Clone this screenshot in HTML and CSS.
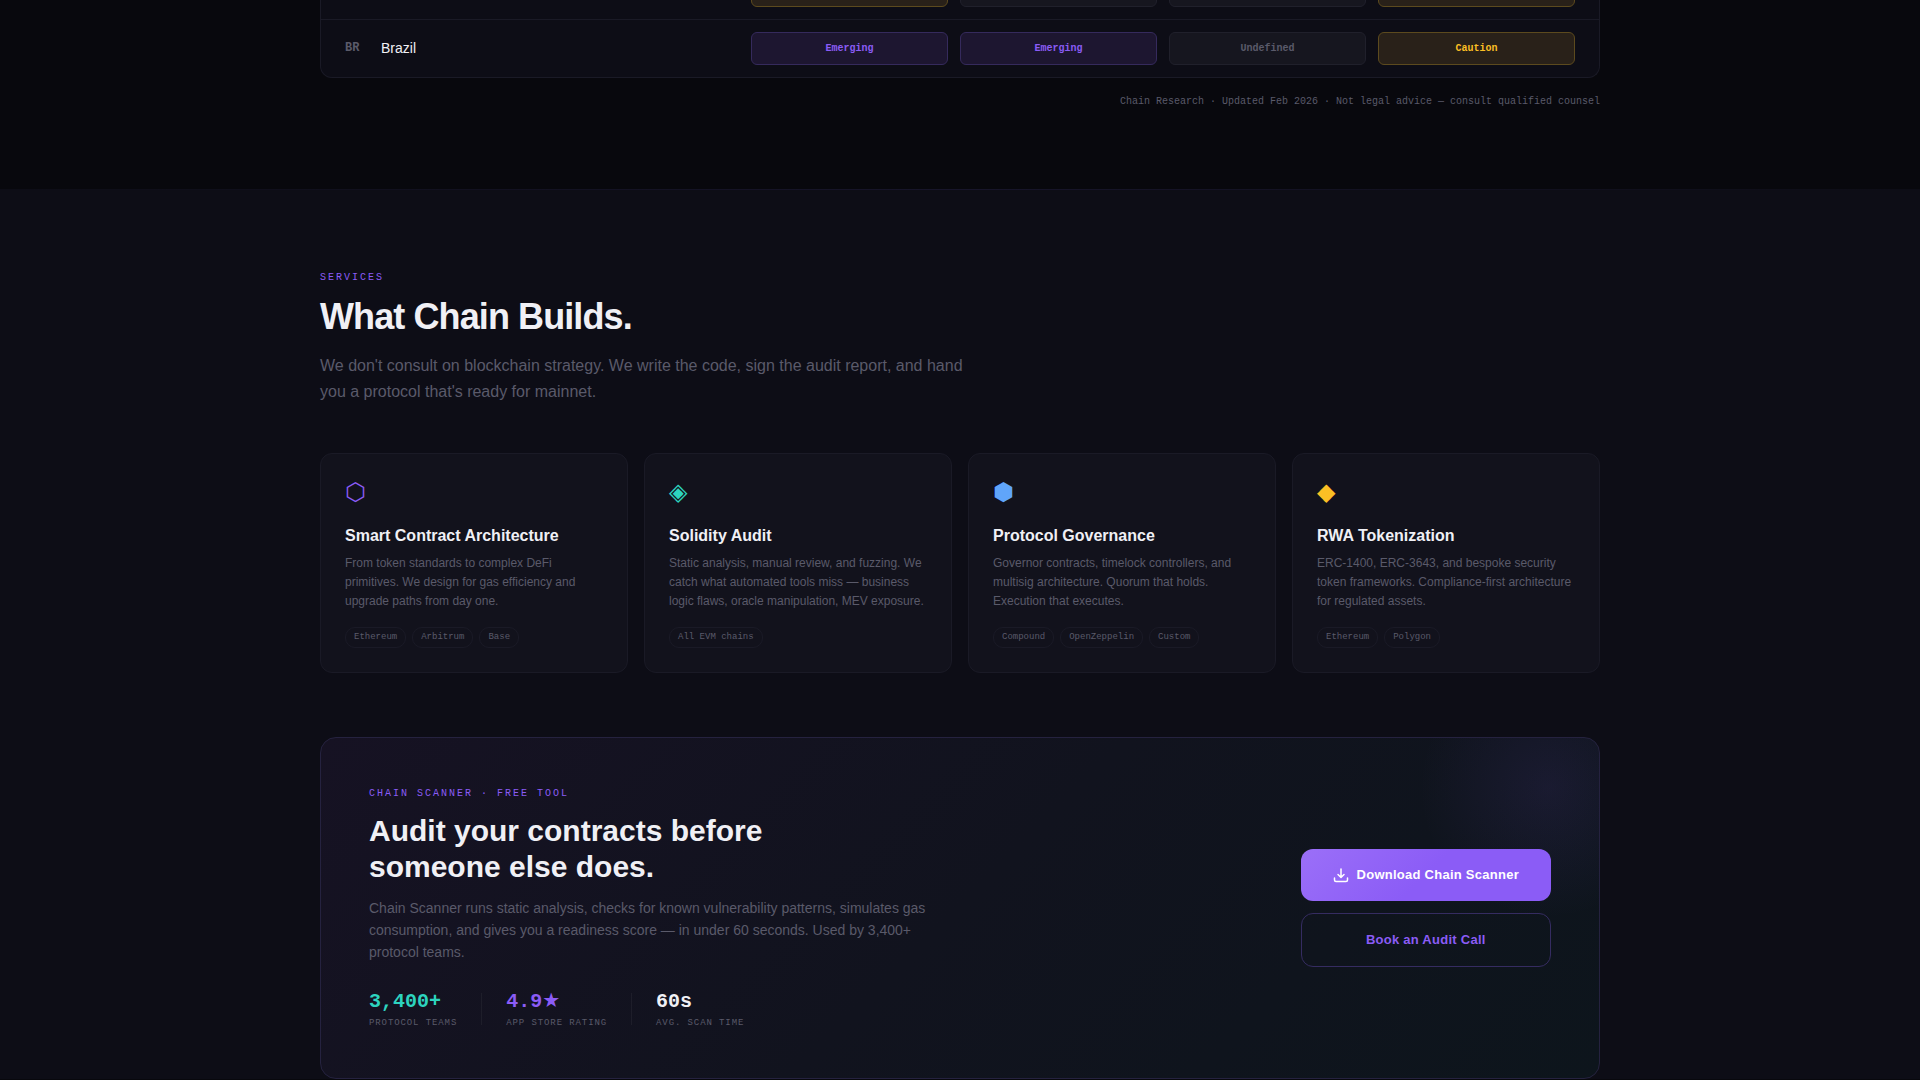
FILE: index.html
```
<!DOCTYPE html>
<html lang="en">
<head>
  <meta charset="UTF-8" />
  <meta name="viewport" content="width=device-width, initial-scale=1.0"/>
  <title>Chain | Services</title>
  <link rel="stylesheet" href="styles.css">
</head>
<body>

  <!-- Regulatory matrix -->
  <section class="matrix">
    <div class="container">
      <table class="matrix-table">
        <tbody>
          <tr>
            <th scope="row"></th>
            <td><span class="status caution"></span></td>
            <td><span class="status undefined"></span></td>
            <td><span class="status undefined"></span></td>
            <td><span class="status caution"></span></td>
          </tr>
          <tr>
            <th scope="row"><span class="code">BR</span> Brazil</th>
            <td><span class="status emerging">Emerging</span></td>
            <td><span class="status emerging">Emerging</span></td>
            <td><span class="status undefined">Undefined</span></td>
            <td><span class="status caution">Caution</span></td>
          </tr>
        </tbody>
      </table>
      <p class="matrix-note">Chain Research · Updated Feb 2026 · Not legal advice — consult qualified counsel</p>
    </div>
  </section>

  <!-- Services -->
  <section class="services">
    <div class="container">
      <p class="eyebrow">SERVICES</p>
      <h2>What Chain Builds.</h2>
      <p class="lead">We don't consult on blockchain strategy. We write the code, sign the audit report, and hand you a protocol that's ready for mainnet.</p>

      <div class="cards">
        <article class="card">
          <div class="card-icon violet">⬡</div>
          <h3>Smart Contract Architecture</h3>
          <p>From token standards to complex DeFi primitives. We design for gas efficiency and upgrade paths from day one.</p>
          <div class="tags"><span>Ethereum</span><span>Arbitrum</span><span>Base</span></div>
        </article>
        <article class="card">
          <div class="card-icon teal">◈</div>
          <h3>Solidity Audit</h3>
          <p>Static analysis, manual review, and fuzzing. We catch what automated tools miss — business logic flaws, oracle manipulation, MEV exposure.</p>
          <div class="tags"><span>All EVM chains</span></div>
        </article>
        <article class="card">
          <div class="card-icon blue">⬢</div>
          <h3>Protocol Governance</h3>
          <p>Governor contracts, timelock controllers, and multisig architecture. Quorum that holds. Execution that executes.</p>
          <div class="tags"><span>Compound</span><span>OpenZeppelin</span><span>Custom</span></div>
        </article>
        <article class="card">
          <div class="card-icon amber">◆</div>
          <h3>RWA Tokenization</h3>
          <p>ERC-1400, ERC-3643, and bespoke security token frameworks. Compliance-first architecture for regulated assets.</p>
          <div class="tags"><span>Ethereum</span><span>Polygon</span></div>
        </article>
      </div>

      <!-- Scanner banner -->
      <div class="scanner">
        <div class="scanner-text">
          <p class="eyebrow">CHAIN SCANNER · FREE TOOL</p>
          <h2>Audit your contracts before<br>someone else does.</h2>
          <p class="scanner-desc">Chain Scanner runs static analysis, checks for known vulnerability patterns, simulates gas consumption, and gives you a readiness score — in under 60 seconds. Used by 3,400+ protocol teams.</p>
          <div class="stats">
            <div class="stat">
              <div class="stat-value teal">3,400+</div>
              <div class="stat-label">PROTOCOL TEAMS</div>
            </div>
            <div class="divider"></div>
            <div class="stat">
              <div class="stat-value violet">4.9<span class="star">★</span></div>
              <div class="stat-label">APP STORE RATING</div>
            </div>
            <div class="divider"></div>
            <div class="stat">
              <div class="stat-value">60s</div>
              <div class="stat-label">AVG. SCAN TIME</div>
            </div>
          </div>
        </div>
        <div class="actions">
          <a class="btn btn-primary" href="#download">
            <svg width="16" height="16" viewBox="0 0 16 16" fill="none" stroke="currentColor" stroke-width="1.5" stroke-linecap="round" stroke-linejoin="round" aria-hidden="true">
              <path d="M8 2v8M5 7.5L8 10.5l3-3M1.5 11v2a1.5 1.5 0 0 0 1.5 1.5h10a1.5 1.5 0 0 0 1.5-1.5v-2"/>
            </svg>
            Download Chain Scanner
          </a>
          <a class="btn btn-outline" href="#book">Book an Audit Call</a>
        </div>
      </div>
    </div>
  </section>

</body>
</html>
```

FILE: styles.css
```
* {
  box-sizing: border-box;
  margin: 0;
  padding: 0;
}

body {
  font-family: "Liberation Sans", Arial, sans-serif;
  font-size: 16px;
  line-height: 1.6;
  background: #08080d;
  color: #f0f0f5;
  overflow: hidden;
}

.container {
  max-width: 1280px;
  margin: 0 auto;
}

.violet { color: #8b5cf6; }
.teal { color: #2dd4bf; }
.blue { color: #60a5fa; }
.amber { color: #fbbf24; }

/* Regulatory matrix */
.matrix {
  margin-top: -38px; /* table continues above the fold */
  padding-bottom: 79px;
}

.matrix-table {
  display: block;
  background: #0d0d16;
  border: 1px solid #1a1a26;
  border-top: none;
  border-radius: 0 0 12px 12px;
}

.matrix-table tbody {
  display: block;
}

.matrix-table tr {
  display: grid;
  grid-template-columns: 2fr 1fr 1fr 1fr 1fr;
  gap: 12px;
  align-items: center;
  padding: 12px 24px;
}

.matrix-table tr + tr {
  border-top: 1px solid #1a1a26;
}

.matrix-table th {
  display: flex;
  align-items: center;
  gap: 12px;
  font-size: 14px;
  font-weight: normal;
  text-align: left;
}

.code {
  width: 24px;
  font-family: "Liberation Mono", monospace;
  font-size: 12px;
  font-weight: bold;
  color: #5a5a6a;
}

.status {
  display: flex;
  align-items: center;
  justify-content: center;
  height: 33px;
  border: 1px solid;
  border-radius: 6px;
  font-family: "Liberation Mono", monospace;
  font-size: 10px;
  font-weight: bold;
}

.emerging {
  color: #8b5cf6;
  background: #1d1630;
  border-color: #352a5c;
}

.undefined {
  color: #5a5a6a;
  background: #16161f;
  border-color: #20202b;
}

.caution {
  color: #fbbf24;
  background: #292119;
  border-color: #5c4a1e;
}

.matrix-note {
  margin-top: 16px;
  font-family: "Liberation Mono", monospace;
  font-size: 10px;
  text-align: right;
  color: #5a5a6a;
}

/* Services */
.services {
  padding-top: 81px;
  background: linear-gradient(90deg, transparent, #17152a, transparent) top / 100% 1px no-repeat #0d0d16;
}

.eyebrow {
  font-family: "Liberation Mono", monospace;
  font-size: 10px;
  letter-spacing: 0.2em;
  color: #8b5cf6;
}

.services h2 {
  margin: 9px 0 14px;
  font-size: 36px;
  line-height: 44px;
  letter-spacing: -0.025em;
}

.lead {
  max-width: 650px;
  line-height: 26px;
  color: #5a5a6a;
}

.cards {
  display: grid;
  grid-template-columns: repeat(4, 1fr);
  gap: 16px;
  margin-top: 48px;
}

.card {
  padding: 24px;
  background: #12121c;
  border: 1px solid #1a1a26;
  border-radius: 12px;
}

.card-icon {
  margin-bottom: 16px;
  font-size: 24px;
  line-height: 28px;
}

.card h3 {
  margin-bottom: 4px;
  font-size: 16px;
  line-height: 28px;
}

.card p {
  font-size: 12px;
  line-height: 19px;
  color: #5a5a6a;
}

.tags {
  display: flex;
  flex-wrap: wrap;
  gap: 6px;
  margin-top: 16px;
}

.tags span {
  padding: 3px 8px;
  border: 1px solid #1a1a26;
  border-radius: 10px;
  font-family: "Liberation Mono", monospace;
  font-size: 9px;
  line-height: 13px;
  color: #5a5a6a;
}

/* Scanner banner */
.scanner {
  display: flex;
  align-items: center;
  justify-content: space-between;
  margin-top: 64px;
  padding: 48px;
  background:
    radial-gradient(circle at calc(100% - 50px) 50px, rgba(139, 92, 246, 0.09), transparent 130px),
    linear-gradient(135deg, #161223, #11131e 50%, #0d151c);
  border: 1px solid #25223f;
  border-radius: 16px;
}

.scanner h2 {
  margin: 11px 0 12px;
  font-size: 30px;
  line-height: 36px;
  letter-spacing: normal;
}

.scanner-desc {
  max-width: 560px;
  font-size: 14px;
  line-height: 22px;
  color: #5a5a6a;
}

.stats {
  display: flex;
  align-items: center;
  gap: 24px;
  margin-top: 25px;
  font-family: "Liberation Mono", monospace;
}

.stat-value {
  font-size: 20px;
  font-weight: bold;
  line-height: 28px;
}

.star {
  font-family: "DejaVu Sans", sans-serif;
  line-height: 20px;
}

.stat-label {
  font-size: 9px;
  letter-spacing: 0.1em;
  line-height: 14px;
  color: #5a5a6a;
}

.divider {
  width: 1px;
  height: 32px;
  background: #1e1e2a;
}

.actions {
  display: flex;
  flex-direction: column;
  gap: 12px;
}

.btn {
  display: flex;
  align-items: center;
  justify-content: center;
  gap: 8px;
  padding: 16px 32px;
  border-radius: 12px;
  font-size: 13px;
  font-weight: bold;
  line-height: 20px;
  letter-spacing: 0.02em;
  text-decoration: none;
}

.btn-primary {
  background: linear-gradient(135deg, #9b6ff8, #8b5cf6 50%);
  color: #fff;
}

.btn-outline {
  border: 1px solid #352c61;
  color: #8b5cf6;
}
```
